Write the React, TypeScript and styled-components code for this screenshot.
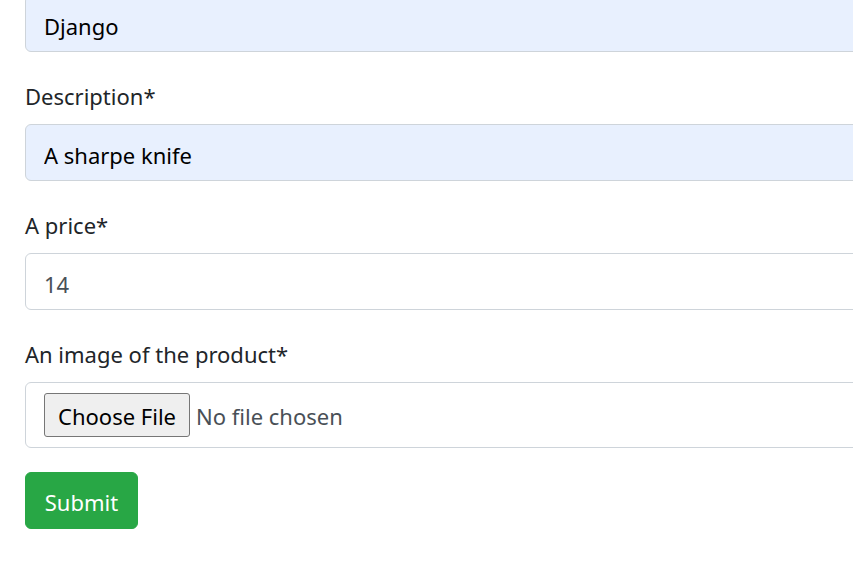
import React from "react";
import styled, { createGlobalStyle } from "styled-components";

const Global = createGlobalStyle`
  html, body { margin: 0; padding: 0; background: #fff; overflow: hidden; }
  body { font-family: "Noto Sans", "Segoe UI", sans-serif; }
`;

const Page = styled.div`
  width: 853px;
  height: 562px;
  overflow: hidden;
`;

const Form = styled.form`
  width: 1000px;
  margin-top: -5px;
  padding-left: 25px;
  display: flex;
  flex-direction: column;
  align-items: flex-start;
`;

const Group = styled.div`
  width: 100%;
  margin-bottom: 24px;
  display: flex;
  flex-direction: column;
`;

const Label = styled.label`
  font-size: 22px;
  line-height: 36px;
  padding-top: 2px;
  height: 36px;
  box-sizing: border-box;
  color: #212529;
  margin-bottom: 12px;
`;

const Input = styled.input<{ $autofill?: boolean }>`
  box-sizing: border-box;
  width: 100%;
  height: 57px;
  padding: 11px 18px 7px;
  font-family: inherit;
  font-size: 22px;
  line-height: 36px;
  color: ${(p) => (p.$autofill ? "#000" : "#495057")};
  background: ${(p) => (p.$autofill ? "#e8f0fe" : "#fff")};
  border: 1px solid #ced4da;
  border-radius: 6px;
  outline: none;
`;

const FileBox = styled.div`
  box-sizing: border-box;
  width: 100%;
  height: 66px;
  padding: 0 18px;
  border: 1px solid #ced4da;
  border-radius: 6px;
  display: flex;
  align-items: center;
  gap: 6px;
`;

const FileButton = styled.button`
  box-sizing: border-box;
  height: 44px;
  width: 146px;
  padding: 2px 0 0;
  font-family: inherit;
  font-size: 22px;
  color: #000;
  background: #efefef;
  border: 1px solid #767676;
  border-radius: 3px;
`;

const FileText = styled.span`
  font-size: 22px;
  padding-top: 2px;
  color: #495057;
`;

const Submit = styled.button`
  box-sizing: border-box;
  height: 57px;
  width: 113px;
  padding: 2px 0 0;
  font-family: inherit;
  font-size: 22px;
  color: #fff;
  background: #28a745;
  border: 1px solid #28a745;
  border-radius: 6px;
`;

export default function App() {
  return (
    <Page>
      <Global />
      <Form onSubmit={(e) => e.preventDefault()}>
        <Group>
          <Input $autofill defaultValue="Django" />
        </Group>
        <Group>
          <Label>Description*</Label>
          <Input $autofill defaultValue="A sharpe knife" />
        </Group>
        <Group>
          <Label>A price*</Label>
          <Input defaultValue="14" />
        </Group>
        <Group>
          <Label>An image of the product*</Label>
          <FileBox>
            <FileButton type="button">Choose File</FileButton>
            <FileText>No file chosen</FileText>
          </FileBox>
        </Group>
        <Submit type="submit">Submit</Submit>
      </Form>
    </Page>
  );
}
